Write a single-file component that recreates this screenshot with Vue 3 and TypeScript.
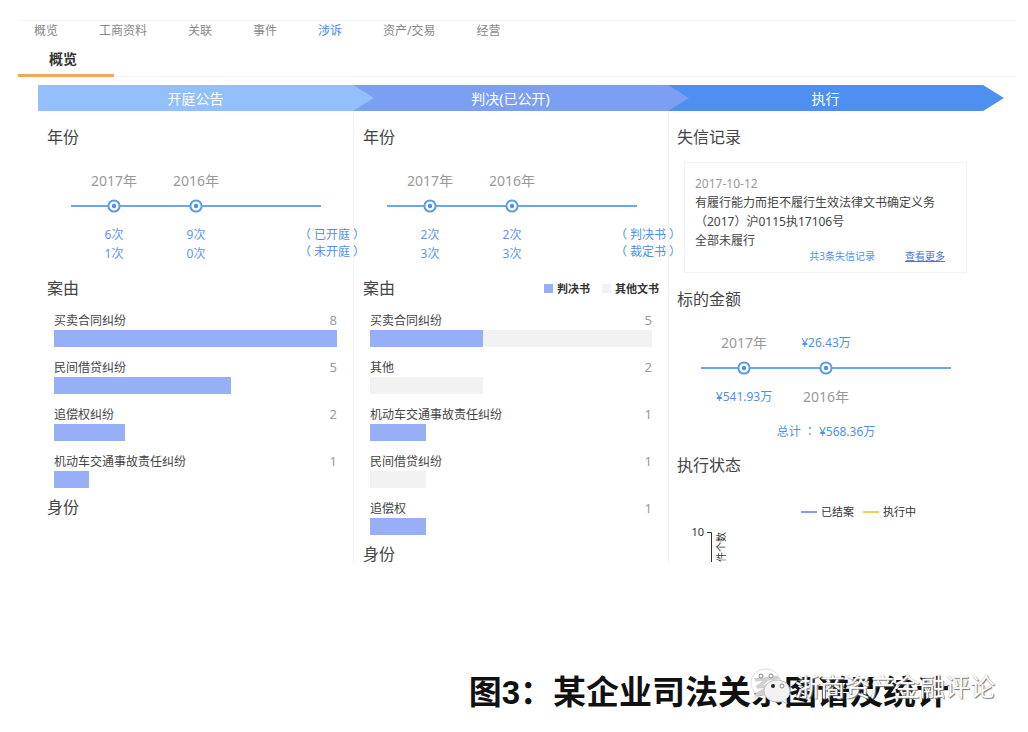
<script setup lang="ts">
interface Cause {
  name: string
  ruling: number
  other: number
}
interface YearPoint {
  year: string
  counts: string[]
}
interface Panel {
  title: string
  points: YearPoint[]
  notes: string[]
  causes: Cause[]
  max: number
  legend: boolean
}

const navItems: string[] = ['概览', '工商资料', '关联', '事件', '涉诉', '资产/交易', '经营']
const activeNav = '涉诉'

const steps: { label: string; tone: string }[] = [
  { label: '开庭公告', tone: 'light' },
  { label: '判决(已公开)', tone: 'mid' },
  { label: '执行', tone: 'deep' },
]

const panels: Panel[] = [
  {
    title: '开庭公告',
    points: [
      { year: '2017年', counts: ['6次', '1次'] },
      { year: '2016年', counts: ['9次', '0次'] },
    ],
    notes: ['（ 已开庭 ）', '（ 未开庭 ）'],
    causes: [
      { name: '买卖合同纠纷', ruling: 8, other: 0 },
      { name: '民间借贷纠纷', ruling: 5, other: 0 },
      { name: '追偿权纠纷', ruling: 2, other: 0 },
      { name: '机动车交通事故责任纠纷', ruling: 1, other: 0 },
    ],
    max: 8,
    legend: false,
  },
  {
    title: '判决',
    points: [
      { year: '2017年', counts: ['2次', '3次'] },
      { year: '2016年', counts: ['2次', '3次'] },
    ],
    notes: ['（ 判决书 ）', '（ 裁定书 ）'],
    causes: [
      { name: '买卖合同纠纷', ruling: 2, other: 3 },
      { name: '其他', ruling: 0, other: 2 },
      { name: '机动车交通事故责任纠纷', ruling: 1, other: 0 },
      { name: '民间借贷纠纷', ruling: 0, other: 1 },
      { name: '追偿权', ruling: 1, other: 0 },
    ],
    max: 5,
    legend: true,
  },
]

const share = (value: number, max: number): string => `${(value / max) * 100}%`
</script>

<template>
  <div class="page">
    <nav class="nav">
      <a v-for="item in navItems" :key="item" href="#" :class="{ active: item === activeNav }">{{ item }}</a>
    </nav>
    <div class="tabs">
      <button type="button" class="tab">概览</button>
    </div>

    <main class="board">
      <div class="steps">
        <div v-for="step in steps" :key="step.label" class="step" :class="step.tone">
          <svg class="tip" viewBox="0 0 21 26" preserveAspectRatio="none" aria-hidden="true">
            <path d="M0 0 21 13 0 26Z" />
          </svg>
          <span>{{ step.label }}</span>
        </div>
      </div>

      <div class="columns">
        <section v-for="panel in panels" :key="panel.title" class="column">
          <h2>年份</h2>
          <div class="timeline">
            <div class="marks above">
              <span v-for="p in panel.points" :key="p.year" class="year">{{ p.year }}</span>
            </div>
            <div class="marks rail">
              <svg v-for="p in panel.points" :key="p.year" viewBox="0 0 14 14" aria-hidden="true">
                <circle class="ring" cx="7" cy="7" r="5.6" />
                <circle class="core" cx="7" cy="7" r="2.2" />
              </svg>
            </div>
            <div class="marks below">
              <div v-for="p in panel.points" :key="p.year" class="counts">
                <span v-for="(c, i) in p.counts" :key="i">{{ c }}</span>
              </div>
              <div class="notes">
                <span v-for="n in panel.notes" :key="n">{{ n }}</span>
              </div>
            </div>
          </div>

          <div class="cause-head">
            <h2>案由</h2>
            <div v-if="panel.legend" class="legend">
              <i class="ruling"></i><span>判决书</span>
              <i class="other"></i><span>其他文书</span>
            </div>
          </div>
          <ul class="causes">
            <li v-for="cause in panel.causes" :key="cause.name">
              <div class="cause-label">
                <span>{{ cause.name }}</span>
                <b>{{ cause.ruling + cause.other }}</b>
              </div>
              <div class="bar">
                <i class="ruling" :style="{ width: share(cause.ruling, panel.max) }"></i>
                <i class="other" :style="{ width: share(cause.other, panel.max) }"></i>
              </div>
            </li>
          </ul>
          <h2 class="identity">身份</h2>
        </section>

        <section class="column">
          <h2>失信记录</h2>
          <article class="record">
            <time datetime="2017-10-12">2017-10-12</time>
            <p>有履行能力而拒不履行生效法律文书确定义务</p>
            <p>（2017）沪0115执17106号</p>
            <p>全部未履行</p>
            <footer>
              <span>共3条失信记录</span>
              <a href="#">查看更多</a>
            </footer>
          </article>

          <h2 class="amount-title">标的金额</h2>
          <div class="timeline amounts">
            <div class="marks above">
              <span class="year">2017年</span>
              <span class="money">¥26.43万</span>
            </div>
            <div class="marks rail">
              <svg v-for="n in 2" :key="n" viewBox="0 0 14 14" aria-hidden="true">
                <circle class="ring" cx="7" cy="7" r="5.6" />
                <circle class="core" cx="7" cy="7" r="2.2" />
              </svg>
            </div>
            <div class="marks under">
              <span class="money">¥541.93万</span>
              <span class="year">2016年</span>
            </div>
            <p class="total">总计 <span class="colon">：</span> ¥568.36万</p>
          </div>

          <h2 class="status-title">执行状态</h2>
          <div class="line-legend">
            <i class="closed"></i><span>已结案</span>
            <i class="running"></i><span>执行中</span>
          </div>
          <svg class="axis" viewBox="0 0 60 39" role="img" aria-label="执行状态">
            <text class="tick" x="15" y="13">10</text>
            <path d="M18 9.5H22.5V39" />
            <text class="axis-name" transform="translate(36 39) rotate(-90)">件个数</text>
          </svg>
        </section>
      </div>
    </main>

    <footer class="caption">
      <h1>图3：某企业司法关系图谱及统计</h1>
      <div class="watermark">
        <svg viewBox="0 0 44 38" aria-hidden="true">
          <path class="bubble back" d="M17 2C9 2 2 8 2 16c0 4 2 7 5 10l-1 5 5-3c2 1 4 1 6 1 8 0 15-6 15-13S25 2 17 2Z" />
          <circle class="eye" cx="12" cy="9" r="2" />
          <circle class="eye" cx="22" cy="9" r="2" />
          <path class="bubble" d="M28 13c-7 0-13 5-13 11s6 11 13 11c2 0 4 0 5-1l5 3-1-5c3-2 4-5 4-8 0-6-6-11-13-11Z" />
          <circle class="pupil" cx="24" cy="19" r="2" />
          <circle class="eye" cx="33" cy="19" r="2" />
        </svg>
        <span>浙商资产金融评论</span>
      </div>
    </footer>
  </div>
</template>

<style>
body {
  margin: 0;
  background: #fff;
}
</style>

<style scoped>
.page {
  padding: 20px 13px 0 18px;
  color: #444;
  font: 12px/19px "Noto Sans", "Noto Sans CJK SC", sans-serif;
}
h1, h2, p, ul {
  margin: 0;
  padding: 0;
}
.nav {
  display: flex;
  gap: 41px;
  height: 22px;
  padding-left: 16px;
  border-top: 1px solid #f4f4f4;
  line-height: 20px;
}
.nav a {
  color: #888;
  text-decoration: none;
}
.nav a.active {
  color: #3f86f2;
}
.tabs {
  display: flex;
  height: 33px;
  border-bottom: 1px solid #f4f4f4;
}
.tab {
  width: 96px;
  height: 34px;
  padding: 2px 6px 2px 0;
  border: 0;
  border-bottom: 3px solid #fba558;
  background: none;
  color: #333;
  font: bold 14px/20px "Noto Sans", "Noto Sans CJK SC", sans-serif;
}
.board {
  margin: 8px 32px 0 20px;
}
.steps {
  display: grid;
  grid-template-columns: repeat(3, 1fr);
  height: 26px;
}
.step {
  position: relative;
  display: flex;
  align-items: center;
  justify-content: center;
  color: #fff;
  font-size: 14px;
}
.tip {
  position: absolute;
  z-index: 1;
  left: 100%;
  top: 0;
  width: 21px;
  height: 26px;
}
.light { background: #94bffd; }
.light .tip { fill: #94bffd; }
.mid { background: #7c9ff4; }
.mid .tip { fill: #7c9ff4; }
.deep { background: #4d90f0; }
.deep .tip { fill: #4d90f0; }
.columns {
  display: grid;
  grid-template-columns: repeat(3, 1fr);
}
.column {
  min-width: 0;
  padding: 14px 0 0 9px;
}
.column + .column {
  border-left: 1px solid #f3f3f3;
}
.column:last-child {
  padding-left: 8px;
}
h2 {
  color: #444;
  font-size: 16px;
  font-weight: 400;
  line-height: 24px;
}
.timeline {
  margin: 22px 0 0 24px;
  width: 250px;
}
.marks {
  display: flex;
  padding-left: 2px;
  white-space: nowrap;
}
.marks > * {
  flex: 0 0 82px;
  text-align: center;
}
.year {
  color: #999;
  font-size: 14px;
  line-height: 20px;
}
.money {
  color: #4d90f0;
  line-height: 20px;
}
.rail {
  margin-top: 8px;
  background: linear-gradient(#6ba6ee, #6ba6ee) 0 6px / 100% 2px no-repeat;
}
.rail svg {
  height: 14px;
}
.ring {
  fill: #fff;
  stroke: #5b9bea;
  stroke-width: 2;
}
.core {
  fill: #4d90f0;
}
.below {
  margin-top: 12px;
  color: #5b97f2;
}
.counts, .notes {
  display: flex;
  flex-direction: column;
}
.marks > .notes {
  flex: 0 0 68px;
  margin-left: 61px;
  color: #4d90f0;
  line-height: 17px;
  padding-top: 1px;
}
.cause-head {
  display: flex;
  align-items: center;
  justify-content: space-between;
  margin-top: 13px;
  padding-right: 9px;
}
.legend {
  display: flex;
  align-items: center;
  color: #333;
  font-size: 11px;
  font-weight: 700;
}
.legend i {
  width: 9px;
  height: 9px;
  margin-right: 4px;
}
.legend span + i {
  margin-left: 12px;
}
.ruling { background: #97aff6; }
.other { background: #f2f2f2; }
.causes {
  margin: 11px 16px 0 7px;
  list-style: none;
}
.causes li {
  height: 47px;
}
.cause-label {
  display: flex;
  justify-content: space-between;
  line-height: 19px;
}
.cause-label b {
  color: #999;
  font-size: 13px;
  font-weight: 400;
}
.bar {
  display: flex;
  height: 17px;
}
.identity {
  margin-top: -2px;
  line-height: 20px;
}
.record {
  margin: 13px 16px 0 7px;
  padding: 11px 21px 10px 10px;
  border: 1px solid #f3f3f3;
  white-space: nowrap;
}
.record time {
  display: block;
  color: #999;
}
.record footer {
  display: flex;
  justify-content: flex-end;
  gap: 30px;
  color: #4d90f0;
  font-size: 10px;
  line-height: 12px;
}
.record a {
  color: #4a74d0;
}
.amount-title {
  margin-top: 14px;
}
.amounts {
  margin-top: 22px;
}
.under {
  margin-top: 12px;
}
.total {
  margin-top: 14px;
  color: #4d90f0;
  text-align: center;
}
.colon {
  font-family: "Noto Sans CJK TC", sans-serif;
}
.status-title {
  margin-top: 12px;
}
.line-legend {
  display: flex;
  align-items: center;
  margin: 25px 0 0 124px;
  color: #333;
  font-size: 11px;
}
.line-legend i {
  width: 16px;
  height: 2px;
  margin-right: 4px;
  background: #7f9cf5;
}
.line-legend span + i {
  margin-left: 9px;
}
.line-legend .running {
  background: #fbc955;
}
.axis {
  display: block;
  width: 60px;
  height: 39px;
  margin: 2px 0 0 12px;
}
.axis text {
  fill: #333;
  font-size: 10px;
}
.axis .tick {
  font-size: 11px;
  text-anchor: end;
}
.axis path {
  fill: none;
  stroke: #333;
}
.caption {
  position: relative;
  display: flex;
  justify-content: flex-end;
  margin-top: 105px;
  padding-right: 66px;
}
.caption h1 {
  color: #111;
  font: bold 33px/48px "Liberation Sans", "Noto Sans CJK SC", sans-serif;
}
.watermark {
  position: absolute;
  right: 20px;
  top: -3px;
  display: flex;
  align-items: center;
  gap: 2px;
  color: #fff;
  font-size: 25px;
  line-height: 40px;
  text-shadow: 1px 1px 1px #777, 0 0 1px #999;
}
.watermark svg {
  width: 44px;
  height: 38px;
}
.bubble {
  fill: #f2f2f2;
  stroke: #bbb;
}
.back {
  fill: #fff;
  fill-opacity: 0.8;
  stroke: #ddd;
}
.eye {
  fill: #fff;
  stroke: #888;
}
.pupil {
  fill: #222;
}
</style>
